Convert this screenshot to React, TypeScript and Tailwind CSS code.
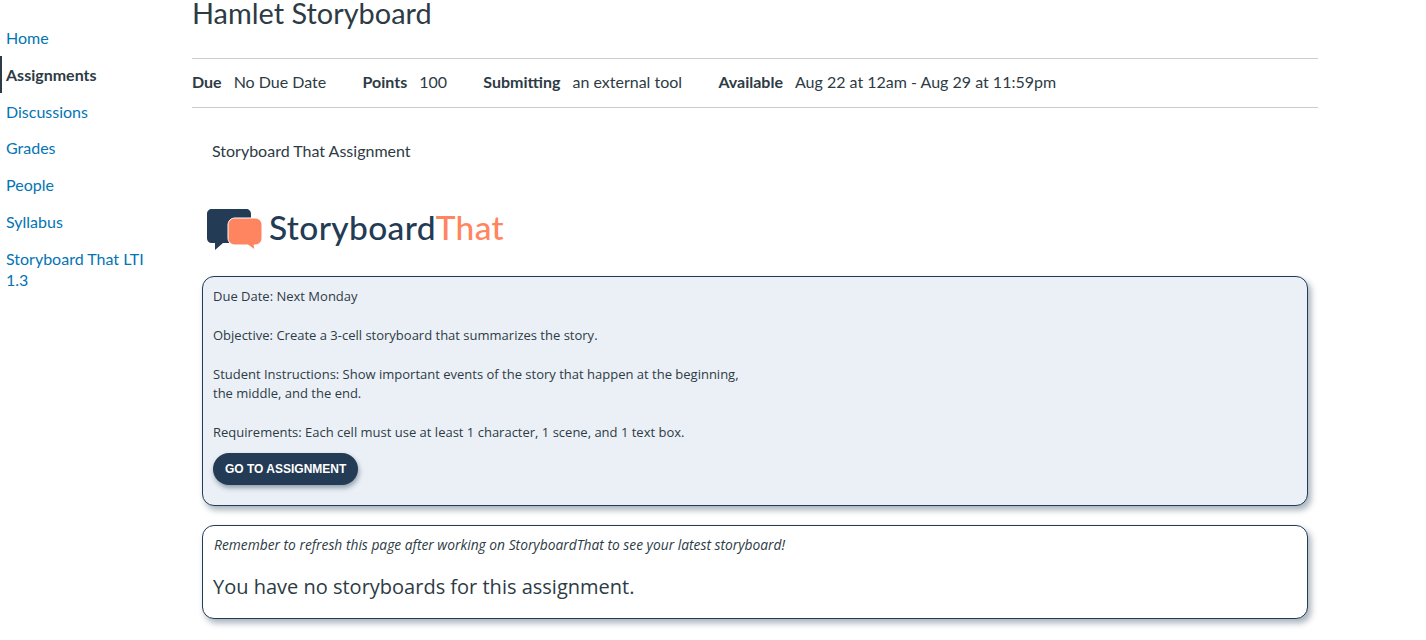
import type { ReactNode } from 'react'

const navItems = ['Home', 'Assignments', 'Discussions', 'Grades', 'People', 'Syllabus', 'Storyboard That LTI 1.3']

function Detail({ label, children }: { label: string; children: ReactNode }) {
  return (
    <div className="mr-[36.3px] flex gap-3">
      <span className="font-bold">{label}</span>
      <span>{children}</span>
    </div>
  )
}

function Logo() {
  return (
    <div className="flex h-[42px] items-center">
      <svg width="58" height="42" viewBox="0 0 58 42" className="shrink-0">
        <path d="M5 0H39C42 0 44 2 44 5V12H26V34H16L8 41V34H5C2 34 0 32 0 29V5C0 2 2 0 5 0Z" fill="#233b54" />
        <path
          d="M28 9H48C52 9 55 12 55 16V29C55 33 52 36 48 36H47L48 41L41 36H28C24 36 21 33 21 29V16C21 12 24 9 28 9Z"
          fill="#ff8560"
          stroke="#ffffff"
          strokeWidth="1"
        />
      </svg>
      <span className="ml-[4px] pb-[4px] text-[33.5px] leading-none font-medium tracking-[0.36px] text-[#233b54] [font-family:'Lato',sans-serif]">
        Storyboard<span className="text-[#ff8560]">That</span>
      </span>
    </div>
  )
}

export default function App() {
  return (
    <div className="flex h-[640px] w-[1426px] overflow-hidden bg-white text-[#2d3b45] [font-family:'Lato',sans-serif]">
      {/* Course nav */}
      <nav className="w-[192px] shrink-0 pt-[19.4px] pr-[36px] text-base">
        <ul>
          {navItems.map((item) => (
            <li key={item}>
              {item === 'Assignments' ? (
                <span className="block border-l-2 border-[#2d3b45] py-[7.6px] pl-[4px] leading-[21.6px] font-bold">{item}</span>
              ) : (
                <span className="block py-[7.6px] pl-[6px] leading-[21.6px] text-[#0374b5]">{item}</span>
              )}
            </li>
          ))}
        </ul>
      </nav>

      <main className="w-[1126px] shrink-0">
        <h1 className="h-[58px] text-[28.9px] leading-[26px] font-normal">Hamlet Storyboard</h1>

        <div className="flex h-[50px] items-center border-y border-[#c7cdd1] pb-[2px] text-base">
          <Detail label="Due">No Due Date</Detail>
          <Detail label="Points">100</Detail>
          <Detail label="Submitting">an external tool</Detail>
          <Detail label="Available">Aug 22 at 12am - Aug 29 at 11:59pm</Detail>
        </div>

        <div className="px-[10px]">
          <p className="mt-[32px] ml-[10px] text-base leading-[22px]">Storyboard That Assignment</p>

          <div className="mt-[47px] ml-[5px]">
            <Logo />
          </div>

          <section className="mt-[25px] h-[230px] rounded-[12px] border border-[#233b54] bg-[#ebf0f7] px-[10px] pt-[9.8px] text-[13px] leading-[19.5px] shadow-[3px_4px_6px_rgba(35,59,84,0.4)] [font-family:'Open_Sans',sans-serif]">
            <p>Due Date: Next Monday</p>
            <p className="mt-[19.5px]">Objective: Create a 3-cell storyboard that summarizes the story.</p>
            <p className="mt-[19.5px]">
              Student Instructions: Show important events of the story that happen at the beginning,
              <br />
              the middle, and the end.
            </p>
            <p className="mt-[19.5px]">Requirements: Each cell must use at least 1 character, 1 scene, and 1 text box.</p>
            <button className="mt-[10px] flex h-[32px] items-center rounded-full bg-[#233b54] px-[12px] pt-[1px] text-[12px] font-bold text-white shadow-[1px_3px_5px_rgba(35,59,84,0.45)] [font-family:'Liberation_Sans',sans-serif]">
              GO TO ASSIGNMENT
            </button>
          </section>

          <section className="mt-[19px] h-[94px] rounded-[12px] border border-[#233b54] bg-white pt-[9px] pr-[10px] pl-[11px] shadow-[3px_4px_6px_rgba(35,59,84,0.4)] [font-family:'Open_Sans',sans-serif]">
            <p className="text-[13.8px] leading-[19px] italic">
              Remember to refresh this page after working on StoryboardThat to see your latest storyboard!
            </p>
            <p className="mt-[18px] -ml-[1px] text-[20px] leading-[30px]">You have no storyboards for this assignment.</p>
          </section>
        </div>
      </main>
    </div>
  )
}
